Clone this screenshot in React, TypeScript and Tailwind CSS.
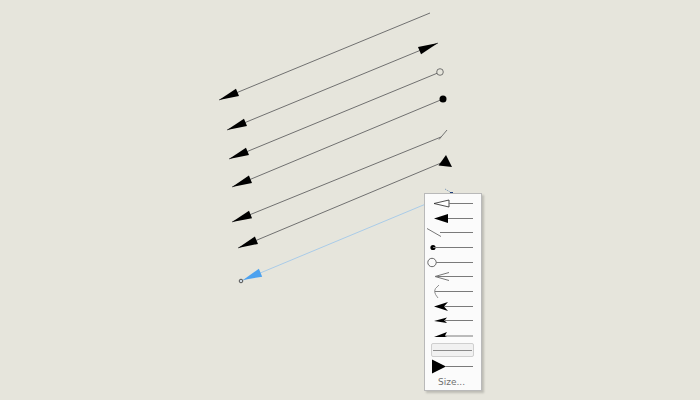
import React from "react";

type P = [number, number];

function head(tip: P, toward: P, len: number, hw: number): string {
  const dx = toward[0] - tip[0];
  const dy = toward[1] - tip[1];
  const d = Math.hypot(dx, dy);
  const ux = dx / d;
  const uy = dy / d;
  const nx = -uy;
  const ny = ux;
  const bx = tip[0] + ux * len;
  const by = tip[1] + uy * len;
  return `${tip[0]},${tip[1]} ${bx + nx * hw},${by + ny * hw} ${bx - nx * hw},${by - ny * hw}`;
}

const LINE = "#707070";

function Canvas() {
  return (
    <svg className="absolute left-0 top-0" width={700} height={400}>
      {/* 1 */}
      <line x1={219} y1={100} x2={430} y2={13} stroke={LINE} strokeWidth={1} />
      <polygon points={head([219, 100], [430, 13], 20, 4)} fill="#000" />
      {/* 2 */}
      <line x1={227} y1={130} x2={438} y2={43} stroke={LINE} strokeWidth={1} />
      <polygon points={head([227, 130], [438, 43], 20, 4)} fill="#000" />
      <polygon points={head([438, 43], [227, 130], 20, 4)} fill="#000" />
      {/* 3 */}
      <line x1={229} y1={159} x2={437} y2={73.3} stroke={LINE} strokeWidth={1} />
      <polygon points={head([229, 159], [440, 72], 20, 4)} fill="#000" />
      <circle cx={440} cy={72} r={3.3} fill="none" stroke="#555" strokeWidth={0.8} />
      {/* 4 */}
      <line x1={232} y1={187} x2={443} y2={99} stroke={LINE} strokeWidth={1} />
      <polygon points={head([232, 187], [443, 99], 20, 4)} fill="#000" />
      <circle cx={443} cy={99} r={3.5} fill="#000" />
      {/* 5 */}
      <line x1={232} y1={222} x2={441} y2={137} stroke={LINE} strokeWidth={1} />
      <polygon points={head([232, 222], [441, 137], 20, 4)} fill="#000" />
      <line x1={439} y1={139.5} x2={447} y2={130} stroke="#666" strokeWidth={0.9} />
      {/* 6 */}
      <line x1={238} y1={248} x2={441} y2={163} stroke={LINE} strokeWidth={1} />
      <polygon points={head([238, 248], [441, 163], 20, 4)} fill="#000" />
      <polygon points="446,155 438.5,165.5 452,167" fill="#000" />
      {/* 7 blue */}
      <line x1={241} y1={281} x2={445} y2={196} stroke="#a9cbe8" strokeWidth={1} />
      <polygon points={head([243, 280], [452, 193], 19, 4.3)} fill="#4da2ef" />
      <circle cx={241} cy={281} r={1.8} fill="#cfd8e0" stroke="#333" strokeWidth={0.8} />
      <line x1={445} y1={189} x2={450} y2={192} stroke="#6a8cb0" strokeWidth={0.8} strokeDasharray="1.5 1" />
      <rect x={450} y={192} width={3} height={3} fill="#1f3f7a" />
    </svg>
  );
}

const G = "#7a7a7a";

function Row({ children, h = "h-[14.7px]" }: { children: React.ReactNode; h?: string }) {
  return <div className={`${h} w-full flex items-center`}>{children}</div>;
}

function Menu() {
  return (
    <div className="absolute left-[424px] top-[193px] w-[58px] border border-[#b9b9b9] bg-[#fbfbfb] shadow-[2px_2px_2px_rgba(0,0,0,0.18)] pt-[2px] flex flex-col">
      <Row>
        <svg width={56} height={15}>
          <polygon points="9,7.5 24,4 24,11" fill="#fff" stroke="#222" strokeWidth={0.8} />
          <line x1={24} y1={7.5} x2={48} y2={7.5} stroke={G} />
        </svg>
      </Row>
      <Row>
        <svg width={56} height={15}>
          <polygon points="9,7.5 23,3 23,12" fill="#000" />
          <line x1={23} y1={7.5} x2={48} y2={7.5} stroke={G} />
        </svg>
      </Row>
      <Row>
        <svg width={56} height={15}>
          <line x1={2} y1={3.5} x2={16} y2={11.5} stroke="#555" strokeWidth={0.8} />
          <line x1={15} y1={7.5} x2={48} y2={7.5} stroke={G} />
        </svg>
      </Row>
      <Row>
        <svg width={56} height={15}>
          <circle cx={8} cy={7.5} r={2.6} fill="#000" />
          <line x1={8} y1={7.5} x2={48} y2={7.5} stroke={G} />
        </svg>
      </Row>
      <Row>
        <svg width={56} height={15}>
          <circle cx={7} cy={7.5} r={4.2} fill="none" stroke="#444" strokeWidth={0.8} />
          <line x1={11} y1={7.5} x2={48} y2={7.5} stroke={G} />
        </svg>
      </Row>
      <Row>
        <svg width={56} height={15}>
          <polyline points="24,3.5 10,7.5 24,11.5" fill="none" stroke="#555" strokeWidth={0.8} />
          <line x1={10} y1={7.5} x2={48} y2={7.5} stroke={G} />
        </svg>
      </Row>
      <Row>
        <svg width={56} height={15}>
          <path d="M14 1 Q9 5 9.5 7.5 Q10 10.5 13 14" fill="none" stroke="#777" strokeWidth={0.8} />
          <line x1={10} y1={7.5} x2={48} y2={7.5} stroke={G} />
        </svg>
      </Row>
      <Row>
        <svg width={56} height={15}>
          <polygon points="9,7.5 23,3 19,7.5 23,12" fill="#000" />
          <line x1={19} y1={7.5} x2={48} y2={7.5} stroke={G} />
        </svg>
      </Row>
      <Row>
        <svg width={56} height={15}>
          <polygon points="9,8 22,4.5 19.5,7.5 22,10" fill="#000" />
          <line x1={19} y1={7.5} x2={48} y2={7.5} stroke={G} />
        </svg>
      </Row>
      <Row>
        <svg width={56} height={15}>
          <polygon points="9,9 22,4 20,7.5 22,9" fill="#000" />
          <line x1={20} y1={8} x2={48} y2={8} stroke={G} />
        </svg>
      </Row>
      <Row>
        <div className="ml-[6px] w-[43px] h-[14px] border border-[#cfcfcf] rounded-[2px] bg-[#f1f1f1] flex items-center">
          <div className="ml-[1px] w-[39px] h-px bg-[#8a8a8a]" />
        </div>
      </Row>
      <Row h="h-[17px]">
        <svg width={56} height={17}>
          <polygon points="7,1.5 21,8.5 7,15.5" fill="#000" />
          <line x1={21} y1={8.5} x2={48} y2={8.5} stroke={G} />
        </svg>
      </Row>
      <div className="h-[15px] w-full flex items-center justify-center pr-[3px]">
        <span className="text-[9px] leading-none text-[#707070] font-['DejaVu_Sans',sans-serif]">Size...</span>
      </div>
    </div>
  );
}

export default function App() {
  return (
    <div className="relative w-[700px] h-[400px] bg-[#e6e5dc] overflow-hidden">
      <Canvas />
      <Menu />
    </div>
  );
}
